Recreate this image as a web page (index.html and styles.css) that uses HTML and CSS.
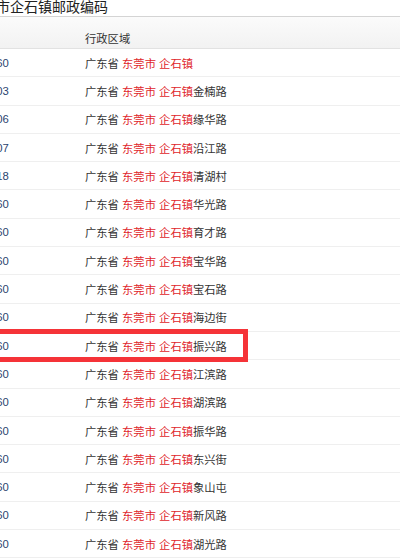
FILE: index.html
```html
<!DOCTYPE html>
<html>
<head>
<meta charset="utf-8">
<link rel="stylesheet" href="styles.css">
</head>
<body>
<div class="page">
  <h2 class="title">东莞市企石镇邮政编码</h2>
  <table class="list">
    <thead>
      <tr><th class="code">邮编</th><th class="area">行政区域</th></tr>
    </thead>
    <tbody>
      <tr><td class="code">523360</td><td class="area">广东省 <span class="red">东莞市</span> <span class="red">企石镇</span></td></tr>
      <tr><td class="code">523403</td><td class="area">广东省 <span class="red">东莞市</span> <span class="red">企石镇</span>金楠路</td></tr>
      <tr><td class="code">523406</td><td class="area">广东省 <span class="red">东莞市</span> <span class="red">企石镇</span>缘华路</td></tr>
      <tr><td class="code">523407</td><td class="area">广东省 <span class="red">东莞市</span> <span class="red">企石镇</span>沿江路</td></tr>
      <tr><td class="code">523418</td><td class="area">广东省 <span class="red">东莞市</span> <span class="red">企石镇</span>清湖村</td></tr>
      <tr><td class="code">523360</td><td class="area">广东省 <span class="red">东莞市</span> <span class="red">企石镇</span>华光路</td></tr>
      <tr><td class="code">523360</td><td class="area">广东省 <span class="red">东莞市</span> <span class="red">企石镇</span>育才路</td></tr>
      <tr><td class="code">523360</td><td class="area">广东省 <span class="red">东莞市</span> <span class="red">企石镇</span>宝华路</td></tr>
      <tr><td class="code">523360</td><td class="area">广东省 <span class="red">东莞市</span> <span class="red">企石镇</span>宝石路</td></tr>
      <tr><td class="code">523360</td><td class="area">广东省 <span class="red">东莞市</span> <span class="red">企石镇</span>海边街</td></tr>
      <tr><td class="code">523360</td><td class="area hl">广东省 <span class="red">东莞市</span> <span class="red">企石镇</span>振兴路<span class="mark"></span></td></tr>
      <tr><td class="code">523360</td><td class="area">广东省 <span class="red">东莞市</span> <span class="red">企石镇</span>江滨路</td></tr>
      <tr><td class="code">523360</td><td class="area">广东省 <span class="red">东莞市</span> <span class="red">企石镇</span>湖滨路</td></tr>
      <tr><td class="code">523360</td><td class="area">广东省 <span class="red">东莞市</span> <span class="red">企石镇</span>振华路</td></tr>
      <tr><td class="code">523360</td><td class="area">广东省 <span class="red">东莞市</span> <span class="red">企石镇</span>东兴街</td></tr>
      <tr><td class="code">523360</td><td class="area">广东省 <span class="red">东莞市</span> <span class="red">企石镇</span>象山屯</td></tr>
      <tr><td class="code">523360</td><td class="area">广东省 <span class="red">东莞市</span> <span class="red">企石镇</span>新风路</td></tr>
      <tr><td class="code">523360</td><td class="area">广东省 <span class="red">东莞市</span> <span class="red">企石镇</span>湖光路</td></tr>
      <tr><td class="code">523360</td><td class="area">广东省 <span class="red">东莞市</span> <span class="red">企石镇</span>湖景路</td></tr>
    </tbody>
  </table>
</div>
</body>
</html>
```

FILE: styles.css
```css
html, body {
  margin: 0;
  padding: 0;
  background: #fff;
  overflow: hidden;
}
body {
  font-family: "Liberation Sans", "Noto Sans CJK SC", sans-serif;
  color: #333;
}
.page {
  width: 400px;
  height: 558px;
  overflow: hidden;
}
.title {
  margin: 0 0 0 -32px;
  height: 17px;
  line-height: 14px;
  font-size: 14px;
  font-weight: normal;
  color: #222;
  white-space: nowrap;
  border-bottom: 1px solid #d4d4d4;
  box-sizing: border-box;
  padding-top: 0;
}
.list {
  margin-left: -40px;
  width: 440px;
  border-collapse: separate;
  border-spacing: 0;
  font-size: 11.3px;
  table-layout: fixed;
}
.list th {
  height: 32px;
  box-sizing: border-box;
  background: linear-gradient(#fbfbfb, #f2f2f2);
  border-bottom: 1px solid #e2e2e2;
  font-weight: normal;
  text-align: left;
  color: #333;
  padding: 11px 0 0 0;
  vertical-align: middle;
}
.list td {
  height: 28.3px;
  box-sizing: border-box;
  border-bottom: 1.5px solid #efefef;
  padding: 0;
  vertical-align: middle;
  white-space: nowrap;
}
.list .code {
  width: 125px;
  padding-left: 11px;
  color: #2b4470;
}
.list th.code {
  color: #333;
}
.list .area {
  padding-left: 0;
  color: #333;
}
.red {
  color: #e0262b;
}
.hl {
  position: relative;
}
.mark {
  position: absolute;
  left: -100px;
  top: -3px;
  width: 263px;
  height: 33px;
  box-sizing: border-box;
  border: 5px solid #f53338;
}
```
